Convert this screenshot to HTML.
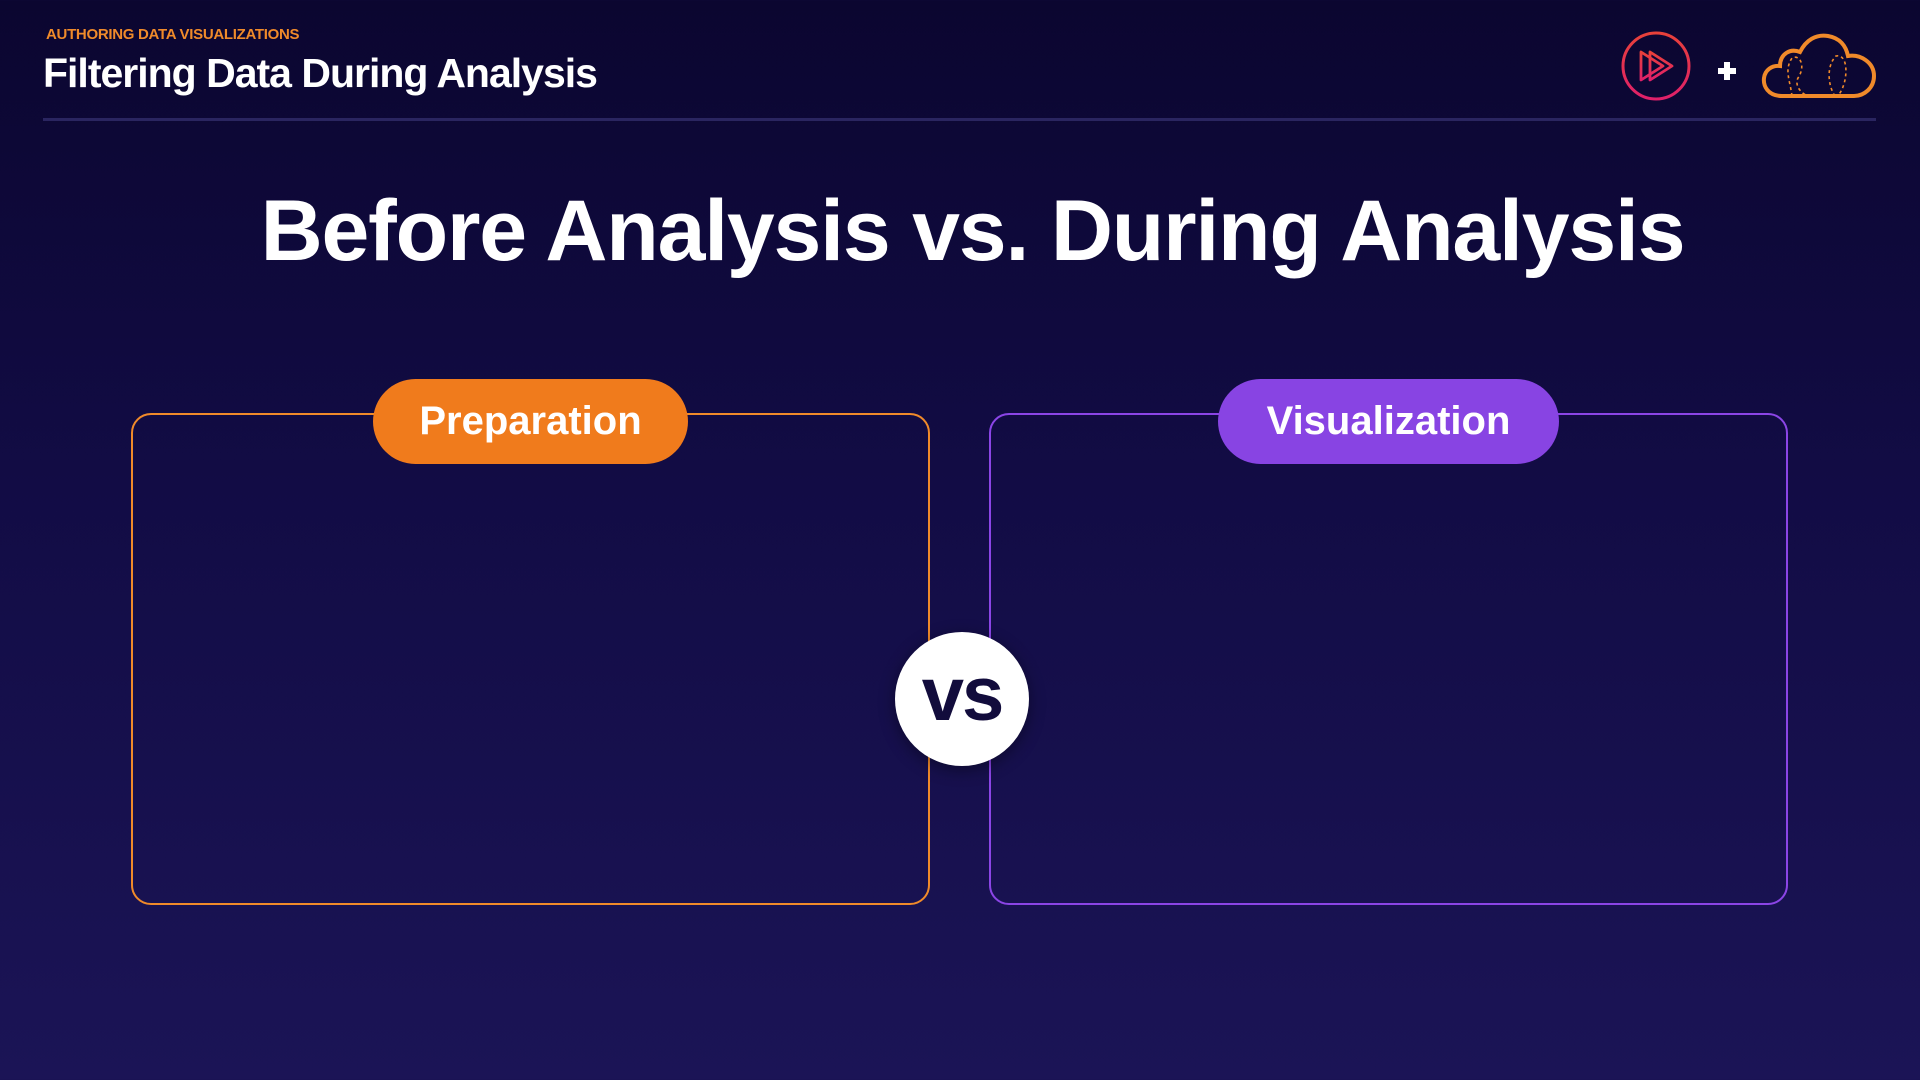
<!DOCTYPE html>
<html><head><meta charset="utf-8"><style>
html,body{margin:0;padding:0}
body{width:1920px;height:1080px;overflow:hidden;position:relative;font-family:"Liberation Sans",sans-serif;background:linear-gradient(180deg,#0b0630 0%,#120c45 45%,#1b1456 100%)}
.a{position:absolute}
.sub{left:46px;top:26px;color:#f08a2a;font-weight:700;font-size:15px;letter-spacing:-0.3px}
.title{left:43px;top:50px;color:#fff;font-weight:700;font-size:41px;letter-spacing:-1px}
.line{left:43px;top:118px;width:1833px;height:3px;background:#2a2560}
.h1{left:0;width:1945px;top:182px;text-align:center;color:#fff;font-weight:700;font-size:86px;letter-spacing:-1.2px}
.box{top:413px;height:492px;width:799px;border-radius:20px;box-sizing:border-box}
.pill{top:379px;height:85px;border-radius:43px;color:#fff;font-weight:700;font-size:40px;text-align:center;line-height:85px}
.vs{left:895px;top:632px;width:134px;height:134px;border-radius:50%;background:#fff;color:#120c3c;font-weight:900;font-size:76px;text-align:center;line-height:126px;letter-spacing:-2px;box-shadow:0 4px 16px rgba(0,0,0,.4)}
</style></head><body>
<div class="a sub">AUTHORING DATA VISUALIZATIONS</div>
<div class="a title">Filtering Data During Analysis</div>
<div class="a line"></div>
<svg class="a" style="left:1620px;top:30px" width="72" height="72" viewBox="0 0 72 72">
<defs><linearGradient id="g" x1="0" y1="0" x2="0" y2="1"><stop offset="0" stop-color="#e8413a"/><stop offset="1" stop-color="#e0206a"/></linearGradient></defs>
<circle cx="36" cy="36" r="33" fill="none" stroke="url(#g)" stroke-width="3"/>
<path d="M21 22v28l22-14z M30 22v28l22-14z" fill="none" stroke="url(#g)" stroke-width="2.8" stroke-linejoin="round"/>
</svg>
<svg class="a" style="left:1716px;top:60px" width="22" height="22"><path d="M11 2v18M2 11h18" stroke="#fff" stroke-width="6"/></svg>
<svg class="a" style="left:1760px;top:30px" width="118" height="70" viewBox="0 0 118 70">
<path d="M22 66 C8 66 3 56 4 48 C5 40 12 35 20 36 C20 24 30 18 40 22 C46 10 56 4 68 6 C80 8 86 16 88 26 C100 24 114 32 114 46 C114 58 104 66 94 66 Z" fill="none" stroke="#f08a2a" stroke-width="4"/>
<g fill="none" stroke="#f08a2a" stroke-width="1.6" stroke-dasharray="3 3"><path d="M32 66 C30 50 24 40 32 28 C40 24 46 36 38 48 C34 56 42 64 48 66"/><path d="M75 66 C68 56 66 36 76 26 C86 24 88 40 84 54 C82 60 80 64 77 66"/></g>
</svg>
<div class="a h1">Before Analysis vs. During Analysis</div>
<div class="a box" style="left:131px;border:2px solid #f08a2a"></div>
<div class="a box" style="left:989px;border:2px solid #8b45e6"></div>
<div class="a pill" style="left:373px;width:315px;background:#f07b1c">Preparation</div>
<div class="a pill" style="left:1218px;width:341px;background:#8844e3">Visualization</div>
<div class="a vs">vs</div>
</body></html>
